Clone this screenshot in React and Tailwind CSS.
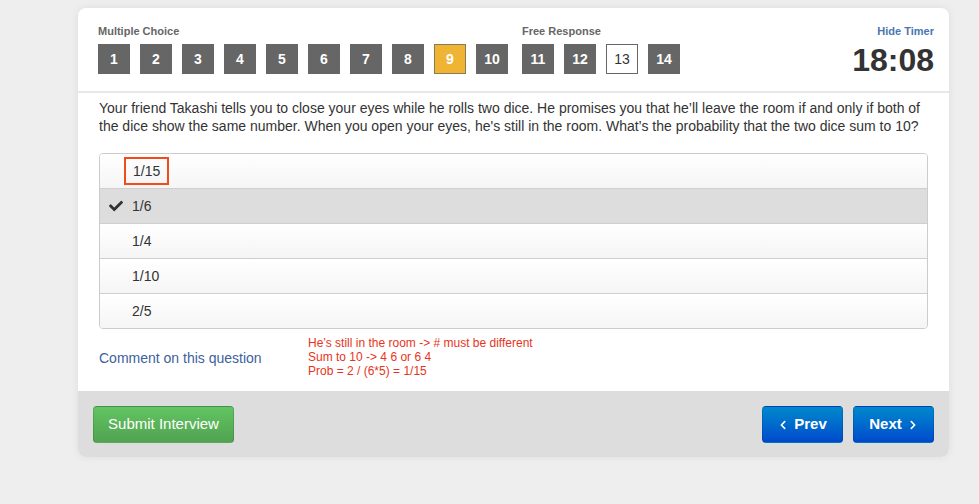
import { FaCheck, FaChevronLeft, FaChevronRight } from 'react-icons/fa'

const answers = ['1/15', '1/6', '1/4', '1/10', '2/5']

function QBox({ n, state }) {
  const base = 'w-[32px] h-[30px] flex items-center justify-center text-[14px]'
  if (state === 'current')
    return <div className={`${base} bg-[#f0b435] border border-[#8a7a55] text-white font-bold`}>{n}</div>
  if (state === 'open')
    return <div className={`${base} bg-white border border-[#666] text-[#333]`}>{n}</div>
  return <div className={`${base} bg-[#666666] text-white font-bold`}>{n}</div>
}

export default function App() {
  const mc = [1, 2, 3, 4, 5, 6, 7, 8, 9, 10]
  const fr = [11, 12, 13, 14]

  return (
    <div className="min-h-[504px] bg-[#eeeeee] pt-[8px] font-['Liberation_Sans',Arial,sans-serif]">
      <div className="ml-[78px] w-[871px] bg-white rounded-[8px] shadow-[0_0_8px_rgba(0,0,0,0.07)]">
        {/* header */}
        <div className="flex items-start justify-between pl-[20px] pr-[15px] pt-[17px] pb-[14px] border-b-2 border-[#e8e8e8]">
          <div className="flex gap-[14px]">
            <div>
              <div className="text-[11px] leading-[13px] font-bold text-[#666] mb-[6px]">Multiple Choice</div>
              <div className="flex gap-[10px]">
                {mc.map((n) => (
                  <QBox key={n} n={n} state={n === 9 ? 'current' : 'done'} />
                ))}
              </div>
            </div>
            <div>
              <div className="text-[11px] leading-[13px] font-bold text-[#666] mb-[6px]">Free Response</div>
              <div className="flex gap-[10px]">
                {fr.map((n) => (
                  <QBox key={n} n={n} state={n === 13 ? 'open' : 'done'} />
                ))}
              </div>
            </div>
          </div>
          <div className="flex flex-col items-end">
            <a className="text-[11px] leading-[13px] font-bold text-[#4a76b2]">Hide Timer</a>
            <div className="text-[32px] leading-[34px] font-bold text-[#333] mt-[5px]">18:08</div>
          </div>
        </div>

        {/* body */}
        <div className="px-[21px] pt-[6px] pb-[13px]">
          <p className="text-[14px] leading-[18px] text-[#333]">
            Your friend Takashi tells you to close your eyes while he rolls two dice. He promises you that he’ll leave the room if and only if both of the dice show the same number. When you open your eyes, he's still in the room. What’s the probability that the two dice sum to 10?
          </p>

          <div className="mt-[18px] border border-[#cccccc] rounded-[4px] overflow-hidden">
            {answers.map((a, i) => (
              <div
                key={a}
                className={`flex items-center relative ${i > 0 ? 'h-[35px] border-t border-[#cfcfcf]' : 'h-[34px]'} ${
                  i === 1 ? 'bg-[#dddddd]' : 'bg-gradient-to-b from-white to-[#f5f5f5]'
                }`}
              >
                {i === 1 && <FaCheck className="absolute left-[9px] text-[#333]" size={14} />}
                {i === 0 ? (
                  <span className="ml-[24px] px-[7px] h-[28px] flex items-center border-2 border-[#f24c1d] text-[14px] text-[#333]">
                    {a}
                  </span>
                ) : (
                  <span className="ml-[32px] text-[14px] text-[#333]">{a}</span>
                )}
              </div>
            ))}
          </div>

          <div className="flex items-center mt-[7px]">
            <a className="w-[209px] text-[14px] text-[#3d5f9e] pt-[3px]">Comment on this question</a>
            <div className="text-[12px] leading-[14px] text-[#e8341c]">
              <div>He’s still in the room -&gt; # must be different</div>
              <div>Sum to 10 -&gt; 4 6 or 6 4</div>
              <div>Prob = 2 / (6*5) = 1/15</div>
            </div>
          </div>
        </div>

        {/* footer */}
        <div className="bg-[#dddddd] rounded-b-[8px] flex items-center justify-between pl-[15px] pr-[15px] pt-[15px] pb-[14px]">
          <button className="w-[141px] h-[37px] rounded-[4px] border border-[rgba(0,0,0,0.12)] bg-gradient-to-b from-[#62c462] to-[#51a351] text-white text-[15px]">
            Submit Interview
          </button>
          <div className="flex gap-[10px]">
            <button className="w-[81px] h-[37px] rounded-[4px] border border-[rgba(0,0,0,0.12)] bg-gradient-to-b from-[#0088cc] to-[#0048cc] text-white text-[15px] font-bold flex items-center justify-center gap-[6px]">
              <FaChevronLeft size={10} /> Prev
            </button>
            <button className="w-[81px] h-[37px] rounded-[4px] border border-[rgba(0,0,0,0.12)] bg-gradient-to-b from-[#0088cc] to-[#0048cc] text-white text-[15px] font-bold flex items-center justify-center gap-[6px]">
              Next <FaChevronRight size={10} />
            </button>
          </div>
        </div>
      </div>
    </div>
  )
}
